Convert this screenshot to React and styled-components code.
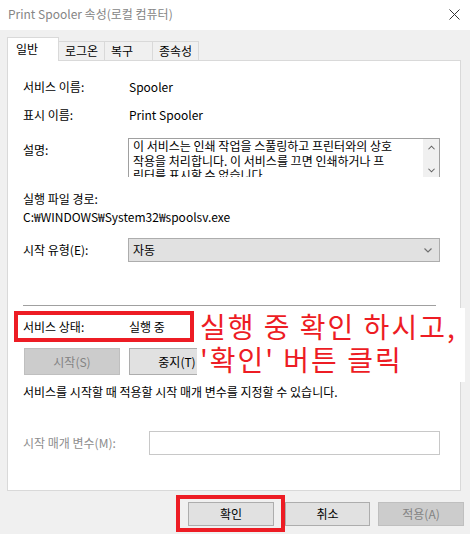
import React from "react";
import styled, { createGlobalStyle } from "styled-components";

const GlobalStyle = createGlobalStyle`
  html, body {
    margin: 0;
    padding: 0;
    background: #f0f0f0;
  }
  body {
    font-family: "Noto Sans CJK KR", "Noto Sans", sans-serif;
    font-size: 12px;
    color: #000;
  }
  * {
    box-sizing: border-box;
  }
`;

const tabs = [
    { name: "일반", width: 52 },
    { name: "로그온", width: 47 },
    { name: "복구", width: 49 },
    { name: "종속성", width: 47 },
];

const descLines = [
    "이 서비스는 인쇄 작업을 스풀링하고 프린터와의 상호",
    "작용을 처리합니다. 이 서비스를 끄면 인쇄하거나 프",
    "린터를 표시할 수 없습니다",
];

const Chevron = ({ up, color = "#606060", w = 8, h = 5 }) => (
    <svg width={w} height={h} viewBox="0 0 8 5">
        <polyline
            points={up ? "0.5,4.5 4,1 7.5,4.5" : "0.5,0.5 4,4 7.5,0.5"}
            fill="none"
            stroke={color}
            strokeWidth="1.2"
        />
    </svg>
);

export default function App() {
    return (
        <Window>
            <GlobalStyle />
            <TitleBar>
                <Title>Print Spooler 속성(로컬 컴퓨터)</Title>
                <svg width="11" height="11" viewBox="0 0 11 11">
                    <path d="M0.5 0.5 L10.5 10.5 M10.5 0.5 L0.5 10.5" stroke="#333" strokeWidth="1" />
                </svg>
            </TitleBar>
            <Body>
                <TabStrip>
                    {tabs.map((t, i) => (
                        <Tab key={t.name} $active={i === 0} $width={t.width} $first={i === 0}>
                            {t.name}
                        </Tab>
                    ))}
                </TabStrip>
                <Panel>
                    <Row $h={20}>
                        <Label $w={106}>서비스 이름:</Label>
                        <span>Spooler</span>
                    </Row>
                    <Row $top={8} $h={20}>
                        <Label $w={106}>표시 이름:</Label>
                        <span>Print Spooler</span>
                    </Row>
                    <Row $top={13} $align="flex-start">
                        <Label $w={105} $pad={3}>설명:</Label>
                        <TextBox>
                            <TextLines>
                                {descLines.map((l) => (
                                    <div key={l}>{l}</div>
                                ))}
                            </TextLines>
                            <ScrollBar>
                                <Chevron up w={7} h={5} />
                                <Chevron w={7} h={5} />
                            </ScrollBar>
                        </TextBox>
                    </Row>
                    <Line $top={13}>실행 파일 경로:</Line>
                    <Line>C:₩WINDOWS₩System32₩spoolsv.exe</Line>
                    <Row $top={12} $h={24}>
                        <Label $w={105}>시작 유형(E):</Label>
                        <Select>
                            <span>자동</span>
                            <Chevron color="#707070" w={8} h={5} />
                        </Select>
                    </Row>
                    <Separator />
                    <StatusBox>
                        <Label $w={106}>서비스 상태:</Label>
                        <span>실행 중</span>
                    </StatusBox>
                    <ButtonRow>
                        <Btn $w={96} $h={27} disabled>시작(S)</Btn>
                        <Btn $w={96} $h={27}>중지(T)</Btn>
                    </ButtonRow>
                    <Line $top={8}>
                        서비스를 시작할 때 적용할 시작 매개 변수를 지정할 수 있습니다.
                    </Line>
                    <Row $top={30} $h={24}>
                        <Label $w={126} $muted>시작 매개 변수(M):</Label>
                        <InputBox />
                    </Row>
                </Panel>
                <Footer>
                    <OkFrame>
                        <Btn $w={86} $h={24}>확인</Btn>
                    </OkFrame>
                    <Btn $w={85} $h={24}>취소</Btn>
                    <Btn $w={86} $h={24} disabled>적용(A)</Btn>
                </Footer>
            </Body>
            <Annotation>
                <div>실행 중 확인 하시고,</div>
                <div>'확인' 버튼 클릭</div>
            </Annotation>
        </Window>
    );
}

const Window = styled.div`
    position: relative;
    width: 470px;
    height: 534px;
    overflow: hidden;
    background: #f0f0f0;
`;

const TitleBar = styled.div`
    height: 30px;
    background: #fff;
    display: flex;
    align-items: center;
    justify-content: space-between;
    padding: 0 10px 2px 8px;
`;

const Title = styled.div`
    color: #858585;
    font-size: 12px;
    line-height: 16px;
`;

const Body = styled.div`
    padding: 7px 9px 0 7px;
`;

const TabStrip = styled.div`
    display: flex;
    align-items: flex-end;
    height: 23px;
`;

const Tab = styled.div`
    position: relative;
    z-index: ${(p) => (p.$active ? 2 : 1)};
    width: ${(p) => p.$width}px;
    height: ${(p) => (p.$active ? 24 : 19)}px;
    margin-left: ${(p) => (p.$first ? 0 : -1)}px;
    margin-bottom: ${(p) => (p.$active ? -1 : 0)}px;
    padding-left: ${(p) => (p.$active ? 8 : 6)}px;
    padding-bottom: ${(p) => (p.$active ? 1 : 0)}px;
    border: 1px solid #d9d9d9;
    border-bottom: none;
    background: ${(p) => (p.$active ? "#fff" : "#f0f0f0")};
    display: flex;
    align-items: center;
    line-height: 16px;
`;

const Panel = styled.div`
    height: 431px;
    background: #fff;
    border: 1px solid #d9d9d9;
    padding: 16px 0 0 15px;
`;

const Row = styled.div`
    display: flex;
    align-items: ${(p) => p.$align || "center"};
    margin-top: ${(p) => p.$top || 0}px;
    height: ${(p) => (p.$h ? `${p.$h}px` : "auto")};
    line-height: 18px;
`;

const Label = styled.div`
    width: ${(p) => p.$w}px;
    flex-shrink: 0;
    padding-top: ${(p) => p.$pad || 0}px;
    color: ${(p) => (p.$muted ? "#8d8d8d" : "#000")};
    white-space: nowrap;
`;

const TextBox = styled.div`
    width: 312px;
    height: 39px;
    display: flex;
    overflow: hidden;
    border: 1px solid #a0a0a0;
    border-bottom: none;
`;

const TextLines = styled.div`
    flex: 1;
    padding: 0 0 0 4px;
    line-height: 14.5px;
    white-space: nowrap;
    overflow: hidden;
`;

const ScrollBar = styled.div`
    width: 16px;
    background: #f0f0f0;
    display: flex;
    flex-direction: column;
    align-items: center;
    justify-content: space-between;
    padding: 6px 0 4px;
`;

const Line = styled.div`
    margin-top: ${(p) => p.$top || 0}px;
    line-height: 18px;
    white-space: nowrap;
`;

const Select = styled.div`
    width: 312px;
    height: 24px;
    background: #e1e1e1;
    border: 1px solid #adadad;
    display: flex;
    align-items: center;
    justify-content: space-between;
    padding: 0 7px 0 4px;
`;

const Separator = styled.div`
    width: 413px;
    height: 1px;
    margin-top: 43px;
    background: #a0a0a0;
`;

const StatusBox = styled.div`
    width: 180px;
    height: 31px;
    margin: 5px 0 0 -9px;
    padding-left: 5px;
    border: 4px solid #ed1c24;
    display: flex;
    align-items: center;
    line-height: 18px;
`;

const ButtonRow = styled.div`
    display: flex;
    gap: 9px;
    margin: 6px 0 0 1px;
`;

const Btn = styled.button`
    width: ${(p) => p.$w}px;
    height: ${(p) => p.$h}px;
    flex-shrink: 0;
    padding: 0;
    font-family: inherit;
    font-size: 12px;
    line-height: 16px;
    background: ${(p) => (p.disabled ? "#cccccc" : "#e1e1e1")};
    border: 1px solid ${(p) => (p.disabled ? "#bfbfbf" : "#adadad")};
    color: ${(p) => (p.disabled ? "#838383" : "#000")};
    display: flex;
    align-items: center;
    justify-content: center;
`;

const InputBox = styled.div`
    width: 291px;
    height: 24px;
    background: #fff;
    border: 1px solid #c8c8c8;
`;

const Footer = styled.div`
    display: flex;
    justify-content: flex-end;
    align-items: center;
    gap: 8px;
    margin: 4px -3px 0 0;
`;

const OkFrame = styled.div`
    width: 109px;
    flex-shrink: 0;
    margin-right: -8px;
    padding: 3px 7px 2px 8px;
    border: 4px solid #ed1c24;
`;

const Annotation = styled.div`
    position: absolute;
    left: 197px;
    top: 308px;
    width: 268px;
    height: 74px;
    padding: 2px 0 0 3px;
    background: #fff;
    color: #ed1c24;
    font-size: 28px;
    line-height: 33px;
    letter-spacing: 2px;
    white-space: nowrap;
`;
